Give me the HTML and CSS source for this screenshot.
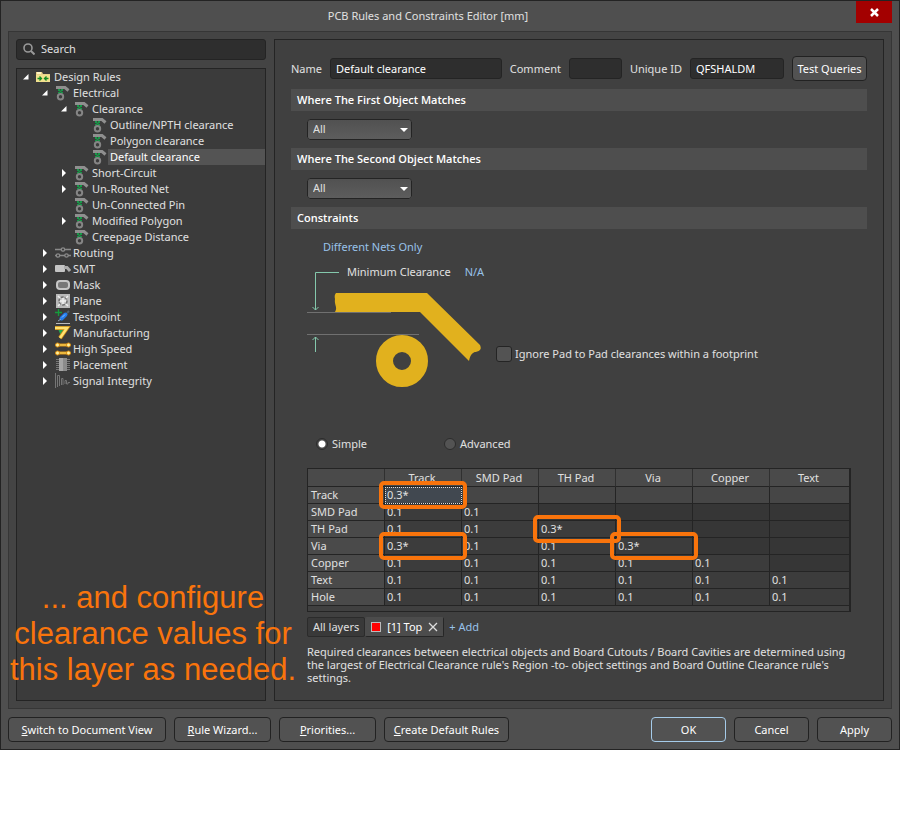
FILE: index.html
```html
<!DOCTYPE html>
<html lang="en">
<head>
    <meta charset="UTF-8">
    <meta name="viewport" content="width=device-width, initial-scale=1.0">
    <title>PCB Rules and Constraints Editor [mm]</title>
    <link rel="stylesheet" href="styles.css">
</head>
<body>
    <svg class="symbols" aria-hidden="true">
        <symbol id="open" viewBox="0 0 6 6"><path d="M5.500 0V5.500H0z" fill="#fff"/></symbol>
        <symbol id="closed" viewBox="0 0 6 8"><path d="M1 0L5 4L1 8z" fill="#fff"/></symbol>
        <symbol id="folder" viewBox="0 0 16 16">
            <path d="M0 3h6l1 2h7v8H0z" fill="#e9d28a"/>
            <path d="M1 3h4v2H1z" fill="#fff3c4"/>
            <path d="M0 6h14v7H0z" fill="#f1e08e"/>
            <path d="M1.500 9.500h4M3.500 7.500l2 2-2 2M12.500 9.500h-4M10.500 7.500l-2 2 2 2" fill="none" stroke="#128a22" stroke-width="1.300"/>
        </symbol>
        <symbol id="clear" viewBox="0 0 16 16">
            <path d="M1 2.500h9l3.500 3" fill="none" stroke="#8f8f8f" stroke-width="3"/>
            <path d="M3 4h2v2H3zM6 4h2v2H6zM4.500 5.500h2v2h-2zM3 7h2v1.500H3zM6 7h2v1.500H6z" fill="#169a48"/>
            <circle cx="5.500" cy="11.700" r="2.700" fill="none" stroke="#858585" stroke-width="2"/>
        </symbol>
        <symbol id="routing" viewBox="0 0 16 16">
            <g fill="none" stroke="#8a8a8a">
                <path d="M0 4.500h6M10 4.500h6" stroke-width="1.500"/>
                <path d="M5 10.500h5M13 10.500h3M0 10.500h1" stroke-width="1.500"/>
                <circle cx="8" cy="4.500" r="1.700" stroke-width="1.300"/>
                <circle cx="3" cy="10.500" r="1.700" stroke-width="1.300"/>
                <circle cx="11.500" cy="10.500" r="1.700" stroke-width="1.300"/>
            </g>
        </symbol>
        <symbol id="smt" viewBox="0 0 16 16">
            <rect y="4" width="10" height="7" rx="1" fill="#c4c4c4"/>
            <path d="M9 6.500h3l3 3.500" fill="none" stroke="#ababab" stroke-width="3"/>
        </symbol>
        <symbol id="mask" viewBox="0 0 16 16">
            <rect x="2" y="4" width="12" height="8" rx="3" fill="#777" stroke="#c6c6c6" stroke-width="2"/>
        </symbol>
        <symbol id="plane" viewBox="0 0 16 16">
            <path d="M1 1h14v14H1z" fill="#b9b9b9"/>
            <circle cx="8" cy="8" r="4" fill="#ccc" stroke="#707070" stroke-width="1.500" stroke-dasharray="3 1"/>
            <path d="M3 3l2 2M13 3l-2 2M3 13l2-2M13 13l-2-2M8 5v6M5 8h6" stroke="#eee" stroke-width="1.500"/>
        </symbol>
        <symbol id="testpoint" viewBox="0 0 16 16">
            <path d="M0 3.500h7M3.500 0v7" stroke="#159c3c" stroke-width="1.300"/>
            <path d="M12 4l2-2" stroke="#50606e" stroke-width="2"/>
            <path d="M6.500 9.500l4-4" stroke="#237cec" stroke-width="4" stroke-linecap="round"/>
            <path d="M3 12l3-2" stroke="#8fa4b8"/>
            <path d="M7 8.500l3-3" stroke="#8dc6ff"/>
            <path d="M1 14.500h14" stroke="#bbb"/>
        </symbol>
        <symbol id="manufacturing" viewBox="0 0 16 16">
            <path d="M3 4h9l-6 7z" fill="#23a750"/>
            <path d="M0 3h12L5 13" fill="none" stroke="#c98b13" stroke-width="4"/>
            <path d="M0 3h12L5 13" fill="none" stroke="#ffe272" stroke-width="2.500"/>
        </symbol>
        <symbol id="speed" viewBox="0 0 16 16">
            <path d="M2 4h12M2 12h12" stroke="#d98f12" stroke-width="3"/>
            <path d="M2 4h12M2 12h12" stroke="#ffe067"/>
            <g fill="#fff09b" stroke="#dc8e10">
                <circle cx="2.500" cy="4" r="2"/><circle cx="13.500" cy="4" r="2"/>
                <circle cx="2.500" cy="12" r="2"/><circle cx="13.500" cy="12" r="2"/>
            </g>
        </symbol>
        <symbol id="placement" viewBox="0 0 16 16">
            <path d="M1 2.500h14M1 4.500h14M1 6.500h14M1 8.500h14M1 10.500h14M1 12.500h14" stroke="#767676"/>
            <path d="M4 1h8v13H4z" fill="#8b8b8b"/>
            <path d="M4 1h4v13H4z" fill="#a5a5a5"/>
        </symbol>
        <symbol id="signal" viewBox="0 0 16 16">
            <path d="M0.500 0v15M2.500 14V2.500h2V13M6.500 12V5.500h1.500V12M10 11V7.500h1.500V11h1.500V9.500h2" fill="none" stroke="#757575"/>
        </symbol>
    </svg>

    <main class="window">
        <header class="titlebar">
            <h1>PCB Rules and Constraints Editor [mm]</h1>
            <button class="close" aria-label="Close">
                <svg viewBox="0 0 9 9"><path d="M1 1l7 7M8 1l-7 7" stroke="#fff" stroke-width="2.500"/></svg>
            </button>
        </header>

        <div class="content">
            <aside class="sidebar">
                <label class="search">
                    <svg viewBox="0 0 12 12"><circle cx="5" cy="5" r="4" fill="none" stroke="#999" stroke-width="1.600"/><path d="M8 8l3.500 3.500" stroke="#999" stroke-width="2"/></svg>
                    <input type="text" placeholder="Search" aria-label="Search">
                </label>
                <ul class="tree">
                    <li><div class="node"><svg class="arrow"><use href="#open"/></svg><svg class="icon"><use href="#folder"/></svg><span>Design Rules</span></div>
                        <ul>
                            <li><div class="node"><svg class="arrow"><use href="#open"/></svg><svg class="icon"><use href="#clear"/></svg><span>Electrical</span></div>
                                <ul>
                                    <li><div class="node"><svg class="arrow"><use href="#open"/></svg><svg class="icon"><use href="#clear"/></svg><span>Clearance</span></div>
                                        <ul>
                                            <li><div class="node"><svg class="arrow"></svg><svg class="icon"><use href="#clear"/></svg><span>Outline/NPTH clearance</span></div></li>
                                            <li><div class="node"><svg class="arrow"></svg><svg class="icon"><use href="#clear"/></svg><span>Polygon clearance</span></div></li>
                                            <li><div class="node selected"><svg class="arrow"></svg><svg class="icon"><use href="#clear"/></svg><span>Default clearance</span></div></li>
                                        </ul>
                                    </li>
                                    <li><div class="node"><svg class="arrow"><use href="#closed"/></svg><svg class="icon"><use href="#clear"/></svg><span>Short-Circuit</span></div></li>
                                    <li><div class="node"><svg class="arrow"><use href="#closed"/></svg><svg class="icon"><use href="#clear"/></svg><span>Un-Routed Net</span></div></li>
                                    <li><div class="node"><svg class="arrow"></svg><svg class="icon"><use href="#clear"/></svg><span>Un-Connected Pin</span></div></li>
                                    <li><div class="node"><svg class="arrow"><use href="#closed"/></svg><svg class="icon"><use href="#clear"/></svg><span>Modified Polygon</span></div></li>
                                    <li><div class="node"><svg class="arrow"></svg><svg class="icon"><use href="#clear"/></svg><span>Creepage Distance</span></div></li>
                                </ul>
                            </li>
                            <li><div class="node"><svg class="arrow"><use href="#closed"/></svg><svg class="icon"><use href="#routing"/></svg><span>Routing</span></div></li>
                            <li><div class="node"><svg class="arrow"><use href="#closed"/></svg><svg class="icon"><use href="#smt"/></svg><span>SMT</span></div></li>
                            <li><div class="node"><svg class="arrow"><use href="#closed"/></svg><svg class="icon"><use href="#mask"/></svg><span>Mask</span></div></li>
                            <li><div class="node"><svg class="arrow"><use href="#closed"/></svg><svg class="icon"><use href="#plane"/></svg><span>Plane</span></div></li>
                            <li><div class="node"><svg class="arrow"><use href="#closed"/></svg><svg class="icon"><use href="#testpoint"/></svg><span>Testpoint</span></div></li>
                            <li><div class="node"><svg class="arrow"><use href="#closed"/></svg><svg class="icon"><use href="#manufacturing"/></svg><span>Manufacturing</span></div></li>
                            <li><div class="node"><svg class="arrow"><use href="#closed"/></svg><svg class="icon"><use href="#speed"/></svg><span>High Speed</span></div></li>
                            <li><div class="node"><svg class="arrow"><use href="#closed"/></svg><svg class="icon"><use href="#placement"/></svg><span>Placement</span></div></li>
                            <li><div class="node"><svg class="arrow"><use href="#closed"/></svg><svg class="icon"><use href="#signal"/></svg><span>Signal Integrity</span></div></li>
                        </ul>
                    </li>
                </ul>
            </aside>

            <section class="editor">
                <div class="fields">
                    <label for="name">Name</label>
                    <input class="field name" id="name" type="text" value="Default clearance">
                    <label for="comment">Comment</label>
                    <input class="field comment" id="comment" type="text">
                    <label for="uid">Unique ID</label>
                    <input class="field uid" id="uid" type="text" value="QFSHALDM">
                    <button class="btn test">Test Queries</button>
                </div>

                <h2>Where The First Object Matches</h2>
                <div class="match">
                    <select aria-label="First object"><option>All</option></select>
                </div>
                <h2>Where The Second Object Matches</h2>
                <div class="match">
                    <select aria-label="Second object"><option>All</option></select>
                </div>
                <h2>Constraints</h2>

                <div class="constraints">
                    <a class="nets" href="#">Different Nets Only</a>
                    <div class="diagram-row">
                        <div class="diagram">
                            <svg viewBox="0 0 180 130" width="180" height="130">
                                <path d="M0 50.500h84M0 72.500h112" stroke="#707070"/>
                                <path d="M32 10.500H8.500V48M5.500 45l3 3 3-3M8.500 90V75M5.500 78l3-3 3 3" fill="none" stroke="#84c8ac"/>
                                <path d="M29 31H120L173 83C176 90 169 89 166 91Q163 93 162 99L113 50H28C31 45 27 43 28 37Q27 33 29 31z" fill="#e1b11e"/>
                                <circle cx="95" cy="99" r="17.500" fill="none" stroke="#e1b11e" stroke-width="17"/>
                            </svg>
                            <div class="caption"><span>Minimum Clearance</span><a href="#">N/A</a></div>
                        </div>
                        <label class="check"><input type="checkbox">Ignore Pad to Pad clearances within a footprint</label>
                    </div>

                    <div class="modes">
                        <label><input type="radio" name="mode" checked>Simple</label>
                        <label><input type="radio" name="mode">Advanced</label>
                    </div>

                    <div class="table-box">
                        <table>
                            <thead>
                                <tr><th></th><th>Track</th><th>SMD Pad</th><th>TH Pad</th><th>Via</th><th>Copper</th><th>Text</th></tr>
                            </thead>
                            <tbody>
                                <tr class="current"><th>Track</th><td class="marked focused">0.3*</td><td></td><td></td><td></td><td></td><td></td></tr>
                                <tr><th>SMD Pad</th><td>0.1</td><td>0.1</td><td class="off"></td><td class="off"></td><td class="off"></td><td class="off"></td></tr>
                                <tr><th>TH Pad</th><td>0.1</td><td>0.1</td><td class="marked">0.3*</td><td class="off"></td><td class="off"></td><td class="off"></td></tr>
                                <tr><th>Via</th><td class="marked">0.3*</td><td>0.1</td><td>0.1</td><td class="marked">0.3*</td><td class="off"></td><td class="off"></td></tr>
                                <tr><th>Copper</th><td>0.1</td><td>0.1</td><td>0.1</td><td>0.1</td><td>0.1</td><td class="off"></td></tr>
                                <tr><th>Text</th><td>0.1</td><td>0.1</td><td>0.1</td><td>0.1</td><td>0.1</td><td>0.1</td></tr>
                                <tr><th>Hole</th><td>0.1</td><td>0.1</td><td>0.1</td><td>0.1</td><td>0.1</td><td>0.1</td></tr>
                            </tbody>
                        </table>
                    </div>

                    <div class="layers">
                        <button class="layer">All layers</button>
                        <button class="layer active"><i class="swatch"></i>[1] Top<svg viewBox="0 0 10 10"><path d="M1 1l8 8M9 1l-8 8" stroke="#ddd" stroke-width="1.300"/></svg></button>
                        <a href="#">+ Add</a>
                    </div>

                    <p class="note">Required clearances between electrical objects and Board Cutouts / Board Cavities are determined using the largest of Electrical Clearance rule's Region -to- object settings and Board Outline Clearance rule's settings.</p>
                </div>
            </section>
        </div>

        <footer class="actions">
            <button class="btn switch"><u>S</u>witch to Document View</button>
            <button class="btn wizard"><u>R</u>ule Wizard...</button>
            <button class="btn wizard"><u>P</u>riorities...</button>
            <button class="btn create"><u>C</u>reate Default Rules</button>
            <button class="btn ok">OK</button>
            <button class="btn">Cancel</button>
            <button class="btn">Apply</button>
        </footer>

        <p class="annotation">... and configure<br>clearance values for<br>this layer as needed.</p>
    </main>
</body>
</html>
```
FILE: styles.css
```css
* {
    box-sizing: border-box;
}

body {
    margin: 0;
    background-color: #fff;
    color: #e0e0e0;
    font-family: 'Noto Sans', 'Open Sans', sans-serif;
    font-size: 11px;
    line-height: 16px;
}

button, input, select {
    font: inherit;
    color: inherit;
    margin: 0;
}

a {
    color: #98c2ea;
    text-decoration: none;
}

ul {
    list-style: none;
    margin: 0;
    padding: 0;
}

.symbols {
    display: none;
}

.window {
    position: relative;
    background-color: #4f4f4f;
    border: 1px solid #232323;
    padding: 0 7px 7px;
}

.titlebar {
    display: flex;
    align-items: flex-start;
    height: 30px;
}

.titlebar h1 {
    flex: 1;
    margin: 0;
    padding: 7px 8px 0 0;
    text-align: center;
    font-size: 11px;
    font-weight: normal;
}

.close {
    display: flex;
    justify-content: center;
    align-items: center;
    width: 36px;
    height: 22px;
    padding: 0;
    border: 0;
    background-color: #a30000;
}

.close svg {
    width: 9px;
    height: 9px;
}

.content {
    display: flex;
    gap: 8px;
    padding: 7px;
    background-color: #444;
    border: 1px solid #363636;
}

.sidebar {
    display: flex;
    flex-direction: column;
    gap: 8px;
    width: 250px;
    flex-shrink: 0;
}

.search {
    display: flex;
    align-items: center;
    gap: 6px;
    height: 21px;
    padding: 0 6px 1px;
    background-color: #2e2e2e;
    border: 1px solid #242424;
    border-radius: 3px;
}

.search svg {
    width: 12px;
    height: 12px;
}

.search input {
    flex: 1;
    min-width: 0;
    padding: 0;
    border: 0;
    background: none;
}

.search input::placeholder {
    color: #e0e0e0;
    opacity: 1;
}

.tree {
    flex: 1;
    background-color: #3b3b3b;
    border: 1px solid #242424;
}

.tree ul .node {
    padding-left: 25px;
}

.tree ul ul .node {
    padding-left: 44px;
}

.tree ul ul ul .node {
    padding-left: 62px;
}

.node {
    display: flex;
    align-items: center;
    height: 16px;
    padding-left: 6px;
}

.arrow {
    width: 6px;
    height: 8px;
    margin-right: 7px;
}

.icon {
    width: 16px;
    height: 16px;
}

.node span {
    flex: 1;
    padding-left: 2px;
    white-space: nowrap;
}

.selected span {
    background-color: #545454;
    color: #fff;
}

.editor {
    flex: 1;
    min-width: 0;
    padding: 16px;
    background-color: #404040;
    border: 1px solid #242424;
}

.fields {
    display: flex;
    align-items: center;
    gap: 8px;
    height: 25px;
    margin-bottom: 8px;
    white-space: nowrap;
}

.field {
    min-width: 0;
    height: 21px;
    padding: 0 5px 1px;
    background-color: #2e2e2e;
    border: 1px solid #242424;
    border-radius: 3px;
    color: #fff;
}

.name {
    flex: 1 1 170px;
}

.comment {
    flex: 0 1 53px;
}

.uid {
    flex: 0 1 94px;
}

h2 {
    margin: 0;
    padding: 3px 6px;
    background-color: #4e4e4e;
    color: #fff;
    font-family: 'Open Sans', 'Noto Sans', sans-serif;
    font-size: 11px;
    font-weight: 600;
    line-height: 16px;
}

.match {
    padding: 8px 16px;
}

select {
    display: block;
    width: 105px;
    height: 21px;
    padding: 0 5px 1px;
    appearance: none;
    border: 1px solid #242424;
    border-radius: 3px;
    background-image: url("data:image/svg+xml,%3Csvg xmlns='http://www.w3.org/2000/svg' viewBox='0 0 8 4'%3E%3Cpath d='M0 0h8L4 4z' fill='white'/%3E%3C/svg%3E"), linear-gradient(#515151, #5d5d5d);
    background-repeat: no-repeat;
    background-position: right 3px center, 0 0;
    background-size: 8px 4px, auto;
}

.constraints {
    padding: 10px 16px 0;
}

.nets {
    display: block;
    padding-left: 16px;
}

.diagram-row {
    display: flex;
    align-items: flex-start;
    gap: 9px;
    height: 181px;
    padding-top: 7px;
}

/* drawing and caption share one cell */
.diagram {
    display: grid;
    width: 180px;
}

.diagram > * {
    grid-area: 1 / 1;
}

.caption {
    display: flex;
    gap: 14px;
    padding: 2px 0 0 40px;
    white-space: nowrap;
}

.check, .modes label {
    display: flex;
    align-items: center;
}

.check {
    gap: 3px;
    padding-top: 84px;
}

.check input {
    appearance: none;
    width: 16px;
    height: 16px;
    background-color: #535353;
    border: 1px solid #242424;
    border-radius: 3px;
}

.modes {
    display: flex;
    padding-left: 9px;
    margin-bottom: 16px;
}

.modes label {
    width: 128px;
    gap: 4px;
}

.modes input {
    appearance: none;
    width: 12px;
    height: 12px;
    border: 1px solid #2c2c2c;
    border-radius: 50%;
    background-color: #535353;
}

.modes input:checked {
    background: radial-gradient(circle, #fff 3px, #484848 4px);
}

.table-box {
    padding-bottom: 5px;
    border: 1px solid #242424;
    border-right-width: 2px;
}

table {
    width: 100%;
    table-layout: fixed;
    border-collapse: separate;
    border-spacing: 0;
}

th, td {
    position: relative;
    width: 77px;
    height: 17px;
    padding: 0 2px;
    border-right: 1px solid #242424;
    border-bottom: 1px solid #242424;
    background-color: #3c3c3c;
    font-weight: normal;
    text-align: left;
    line-height: 16px;
}

th {
    background-color: #4a4a4a;
    padding-left: 3px;
}

thead th {
    height: 18px;
    padding: 1px 2px 0 0;
    text-align: center;
    border-right-color: #303030;
}

th:last-child, td:last-child {
    width: auto;
    border-right: 0;
}

.current td {
    background-color: #464646;
}

td.off {
    background-color: #363636;
}

.current .focused {
    background-color: #414850;
    outline: 1px dotted #ddd;
    outline-offset: -1px;
}

.marked::after {
    content: '';
    position: absolute;
    z-index: 1;
    inset: -6px;
    border: 4px solid #f9740c;
    border-radius: 5px;
}

.layers {
    display: flex;
    align-items: center;
    margin-top: 5px;
    margin-bottom: 8px;
}

.layers a {
    margin-left: 5px;
}

.layer {
    display: flex;
    align-items: center;
    gap: 6px;
    height: 20px;
    padding: 0 5px;
    background-color: #393939;
    border: 1px solid #2b2b2b;
    border-radius: 2px;
}

.layer.active {
    background-color: #4c4c4c;
    border-color: #4c4c4c #262626 #262626 #4c4c4c;
    color: #fff;
}

.layer svg {
    width: 10px;
    height: 10px;
}

.swatch {
    width: 10px;
    height: 10px;
    background-color: #f00;
    border: 1px solid #bbb;
}

.note {
    margin: 0;
    line-height: 13px;
}

.actions {
    display: flex;
    gap: 8px;
    margin-top: 8px;
}

.btn {
    width: 75px;
    height: 25px;
    padding: 0;
    background-color: #525252;
    border: 1px solid #222;
    border-radius: 4px;
    color: #fff;
    white-space: nowrap;
}

.switch {
    width: 158px;
}

.wizard {
    width: 97px;
}

.create {
    width: 125px;
}

.ok {
    margin-left: auto;
    border-color: #a5cbe9;
}

.annotation {
    position: absolute;
    left: 2px;
    bottom: 61px;
    width: 300px;
    margin: 0;
    color: #f9740c;
    font-family: 'Liberation Sans', Arial, sans-serif;
    font-size: 31px;
    line-height: 36px;
    text-align: center;
}
```
